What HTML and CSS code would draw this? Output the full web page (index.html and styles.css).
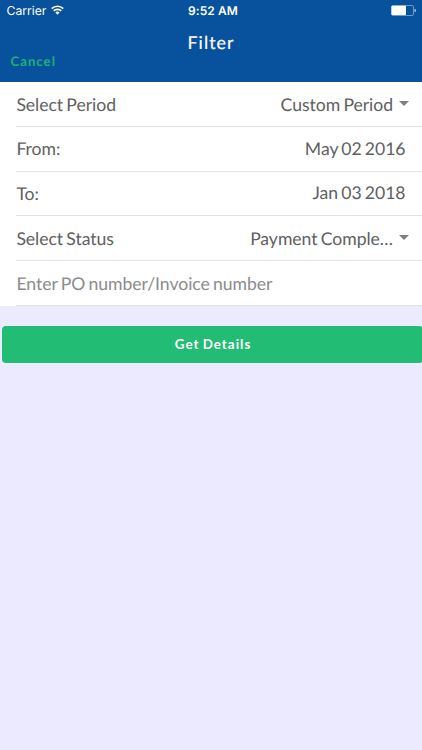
FILE: index.html
```
<!DOCTYPE html>
<html lang="en">
<head>
<meta charset="utf-8">
<title>Filter</title>
<link rel="stylesheet" href="styles.css">
</head>
<body>
<header class="top">
  <div class="status">
    <div class="carrier"><span>Carrier</span>
      <svg class="wifi" width="13" height="10" viewBox="0 0 13 10"><path d="M.7 3.6a8.300 8.300 0 0 1 11.600 0M2.700 5.900a5.400 5.400 0 0 1 7.600 0" fill="none" stroke="#fff" stroke-width="1.700"/><path d="M4.400 7.600a3 3 0 0 1 4.200 0L6.500 9.800z" fill="#fff"/></svg>
    </div>
    <div class="time">9:52 AM</div>
    <svg class="battery" width="25" height="11" viewBox="0 0 25 11"><rect x=".5" y=".5" width="22" height="10" rx="1.500" fill="none" stroke="#6f97c7"/><rect x=".5" y=".8" width="14.500" height="9.200" rx=".8" fill="#fff"/><path d="M23.500 3.700q1.500.5 1.500 1.800t-1.500 1.800z" fill="#c5d6ea"/></svg>
  </div>
  <h1 class="title">Filter</h1>
  <a class="cancel">Cancel</a>
</header>
<main>
  <section class="form">
    <div class="row"><span class="label">Select Period</span><span class="value">Custom Period</span><i class="caret"></i></div>
    <div class="row"><span class="label">From:</span><span class="value date">May 02 2016</span></div>
    <div class="row"><span class="label">To:</span><span class="value date">Jan 03 2018</span></div>
    <div class="row"><span class="label">Select Status</span><span class="value">Payment Comple…</span><i class="caret"></i></div>
    <div class="row"><span class="hint">Enter PO number/Invoice number</span></div>
  </section>
  <button class="submit">Get Details</button>
</main>
</body>
</html>
```
FILE: styles.css
```
* { box-sizing: border-box; }
body { margin: 0; min-height: 750px; background: #ebeafe; font-family: Lato, sans-serif; color: #606060; overflow: hidden; text-rendering: geometricPrecision; }
.top { height: 82px; background: #08519c; color: #fff; }
.status { height: 22px; display: grid; grid-template-columns: 1fr auto 1fr; align-items: center; padding: 0 6.5px; font: 12.2px/22px Inter, sans-serif; }
.carrier { display: flex; align-items: center; gap: 5px; }
.wifi { margin-top: -2px; }
.time { font-weight: 600; font-size: 12px; margin-left: 4px; letter-spacing: .1px; }
.battery { justify-self: end; margin-top: -1px; }
.title { margin: 8px 0 0; height: 24px; font-size: 17.8px; line-height: 24px; font-weight: 400; letter-spacing: 1.05px; text-align: center; -webkit-text-stroke: .2px #fff; }
.cancel { display: block; margin: -2px 0 0 10.5px; font-size: 13.2px; line-height: 18px; font-weight: 700; letter-spacing: 1px; color: #20af7b; }
.form { background: #fff; padding-left: 16px; height: 224px; }
.row { height: 44.8px; display: flex; align-items: center; border-bottom: 1px solid #e2e2e2; font-size: 17.6px; word-spacing: -1.2px; letter-spacing: -.04px; }
.row:first-child { padding-top: 1px; }
.label { flex: 1; padding-left: .4px; }
.date { margin-right: 16.5px; }
.row:nth-child(2) .date { padding-bottom: 1px; }
.row:nth-child(3) .date { padding-bottom: 1px; }
.caret { margin: -2px 13.5px 0 5.5px; border: 5px solid transparent; border-top-color: #808080; border-bottom: 0; }
.hint { color: #8b8b8b; padding-left: .4px; }
.submit { display: block; width: 421px; height: 37px; margin: 20px 0 0 2px; padding: 0 0 1px 1px; border: 0; border-radius: 4px; background: #22bc74; color: #fff; font: 700 13.4px Lato, sans-serif; letter-spacing: 1px; word-spacing: -1px; }
```
